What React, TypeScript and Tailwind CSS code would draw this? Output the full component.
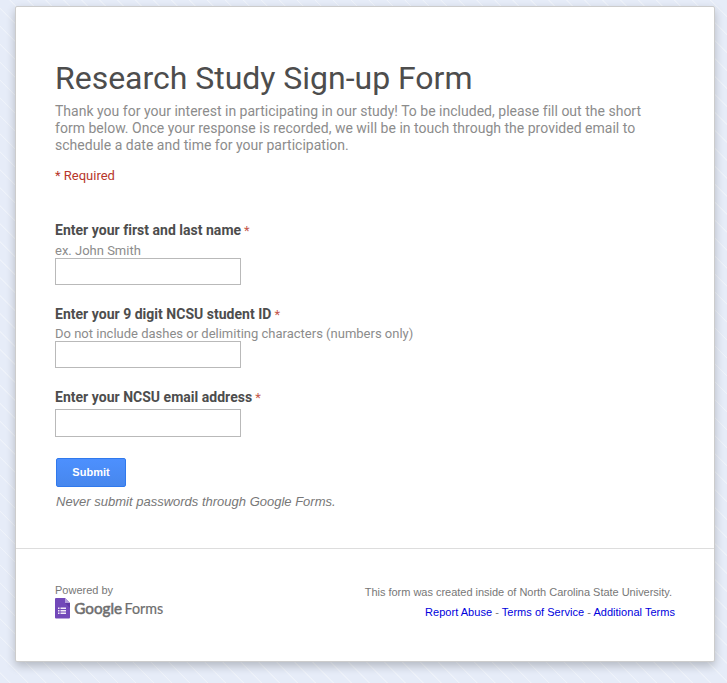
import React from "react";

type FieldProps = {
  label: string;
  help?: string;
  className?: string;
  helpClassName?: string;
  inputClassName: string;
};

function Field({ label, help, className = "", helpClassName = "", inputClassName }: FieldProps) {
  return (
    <div className={className}>
      <label className="block h-[18px] whitespace-nowrap text-[14px] leading-[18px]">
        <span className="font-bold tracking-[0.02px] text-[#4d4d4d]">{label}</span>
        <span className="ml-[3px] text-[13px] text-[#c4574b]">*</span>
      </label>
      {help && (
        <div className={`h-4 whitespace-nowrap text-[13px] leading-4 text-[#8c8c8c] ${helpClassName}`}>
          {help}
        </div>
      )}
      <input
        type="text"
        aria-label={label}
        className={`block w-[186px] border border-[#b9b9b9] bg-white px-2 outline-none ${inputClassName}`}
      />
    </div>
  );
}

function FormsLogo() {
  return (
    <svg className="block" width="110" height="23" viewBox="0 0 110 23">
      <path d="M1 0H10L15 5V19.5A1 1 0 0 1 14 20.5H1A1 1 0 0 1 0 19.5V1A1 1 0 0 1 1 0Z" fill="#7248b9" />
      <path d="M10 0L15 5H10Z" fill="#b39ddb" />
      <path d="M10 5H15V10Z" fill="#6038a5" />
      <path d="M3 9.5H4.5V11H3ZM3 12H4.5V13.5H3ZM3 14.5H4.5V16H3ZM5.5 9.5H11V11H5.5ZM5.5 12H11V13.5H5.5ZM5.5 14.5H11V16H5.5Z" fill="#f1ebf8" />
      <text x="19.3" y="16" fontFamily="Lato, sans-serif" fontSize="15.2" fontWeight="400" fill="#6e6e6e" stroke="#6e6e6e" strokeWidth="0.55" textLength="47.8" lengthAdjust="spacingAndGlyphs">Google</text>
      <text x="69.5" y="16" fontFamily="Lato, sans-serif" fontSize="14.5" fontWeight="400" fill="#6e6e6e" stroke="#6e6e6e" strokeWidth="0.2" textLength="38.7" lengthAdjust="spacingAndGlyphs">Forms</text>
    </svg>
  );
}

export default function App() {
  return (
    <div className="h-[683px] w-[727px] overflow-hidden bg-[#e6ecf8] bg-[repeating-linear-gradient(45deg,transparent_0px,transparent_6.5px,#eff3fa_7px,#eff3fa_7.5px,transparent_8px,transparent_12.7px)] pt-[6px] pl-[15px] font-['Roboto',sans-serif]">
      <div className="flex h-[656px] w-[700px] flex-col rounded-[2px] border border-[#cccccc] bg-white shadow-[0_4px_10px_rgba(0,0,0,0.22)]">
        <main className="h-[541px] px-[39px] pt-[50px]">
          <h1 className="h-[42px] whitespace-nowrap text-[32px] leading-[42px] tracking-[-0.02px] text-[#4d4d4d]">
            Research Study Sign-up Form
          </h1>
          <p className="mt-1 whitespace-nowrap text-[14px] leading-[17px] tracking-[0.012px] text-[#8c8c8c]">
            Thank you for your interest in participating in our study! To be included, please fill out the short
            <br />
            form below. Once your response is recorded, we will be in touch through the provided email to
            <br />
            schedule a date and time for your participation.
          </p>
          <div className="mt-[14px] h-4 text-[13px] leading-4 text-[#b7362b]">* Required</div>
          <form>
            <Field label="Enter your first and last name" help="ex. John Smith" className="mt-[37px]" helpClassName="mt-1" inputClassName="-mt-px h-[27px]" />
            <Field label="Enter your 9 digit NCSU student ID" help="Do not include dashes or delimiting characters (numbers only)" className="mt-5" helpClassName="mt-[3px]" inputClassName="-mt-px h-[27px]" />
            <Field label="Enter your NCSU email address" className="mt-5" inputClassName="mt-[3px] h-[28px]" />
            <button
              type="button"
              className="mt-[21px] ml-px block h-[29px] w-[70px] rounded-[2px] border border-[#3079ed] bg-linear-to-b from-[#4d90fe] to-[#4787ed] font-['Liberation_Sans',sans-serif] text-[11px] leading-[27px] font-bold text-white"
            >
              Submit
            </button>
          </form>
          <div className="mt-[7px] ml-px font-['Liberation_Sans',sans-serif] text-[13px] leading-4 whitespace-nowrap text-[#777777] italic">
            Never submit passwords through Google Forms.
          </div>
        </main>
        <footer className="flex flex-1 justify-between border-t border-[#dddddd] pr-[39px] pl-[39px] font-['Liberation_Sans',sans-serif] text-[11px] text-[#777777]">
          <div className="pt-[34px]">
            <div className="mb-px h-[14px] leading-[14px]">Powered by</div>
            <FormsLogo />
          </div>
          <div className="pt-[36px] text-right leading-[14px] whitespace-nowrap">
            <div className="pr-[3px] tracking-[-0.02px]">This form was created inside of North Carolina State University.</div>
            <div className="mt-[6px] tracking-[0.03px]">
              <a className="text-[#0000dd]">Report Abuse</a> - <a className="text-[#0000dd]">Terms of Service</a> -{" "}
              <a className="text-[#0000dd]">Additional Terms</a>
            </div>
          </div>
        </footer>
      </div>
    </div>
  );
}
